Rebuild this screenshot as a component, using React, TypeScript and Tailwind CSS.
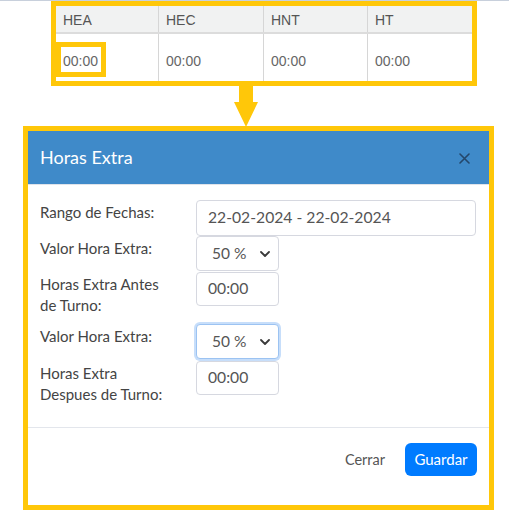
import React from "react";

const columns = ["HEA", "HEC", "HNT", "HT"];
const colWidths = ["w-[102px]", "w-[105px]", "w-[104px]", "w-[104px]"];

function Chevron() {
    return (
        <svg width="10" height="6" viewBox="0 0 10 6" className="ml-auto mr-[8px]">
            <path d="M1 1 L5 5 L9 1" fill="none" stroke="#3a3a3a" strokeWidth="1.8" strokeLinecap="round" strokeLinejoin="round" />
        </svg>
    );
}

function SelectBox({ focused }: { focused?: boolean }) {
    return (
        <div
            className={`flex items-center w-[83px] h-[35px] rounded-[4px] border bg-white pl-[15px] text-[#555] text-[15.5px] ${
                focused ? "border-[#9cc3f2] shadow-[0_0_0_2px_#c7defa]" : "border-[#d6d8e0]"
            }`}
        >
            <span>50 %</span>
            <Chevron />
        </div>
    );
}

function TextBox({ value, wide }: { value: string; wide?: boolean }) {
    return (
        <div
            className={`flex items-center ${wide ? "w-[280px] h-[36px]" : "w-[83px] h-[34px]"} rounded-[4px] border border-[#d6d8e0] bg-white pl-[11px] text-[#555] text-[15.7px]`}
        >
            {value}
        </div>
    );
}

function FormRow({ label, children, height }: { label: React.ReactNode; children: React.ReactNode; height: string }) {
    return (
        <div className={`flex items-start ${height}`}>
            <div className="w-[156px] pt-[2px] leading-[21px] text-[#444]">{label}</div>
            {children}
        </div>
    );
}

export default function App() {
    return (
        <div className="w-[509px] h-[520px] bg-white font-['Lato',sans-serif] text-[15px]">
            <div className="h-[1px] bg-[#c8d0dc]" />

            {/* TABLE */}
            <div className="relative ml-[51px] w-[426px] border-[5px] border-[#ffc709] bg-white font-['Liberation_Sans',Arial,sans-serif] text-[14px]">
                <div className="flex h-[28px] bg-[#f1f2f2] border-b-2 border-[#dcdcdc] text-[#555]">
                    {columns.map((c, i) => (
                        <div key={c} className={`${colWidths[i]} pl-[7px] pt-[4px] ${i > 0 ? "border-l border-[#d6d6d6]" : ""}`}>
                            {c}
                        </div>
                    ))}
                </div>
                <div className="flex h-[47px] text-[#666]">
                    {columns.map((c, i) => (
                        <div key={c} className={`${colWidths[i]} pl-[7px] pt-[17px] ${i > 0 ? "border-l border-[#d6d6d6]" : ""}`}>
                            00:00
                        </div>
                    ))}
                </div>
                <div className="absolute left-0 top-[36px] w-[50px] h-[35px] border-[5px] border-[#ffc709]" />
            </div>

            {/* ARROW */}
            <div className="ml-[234px] h-[40px]">
                <svg width="24" height="41" viewBox="0 0 24 41">
                    <polygon points="5,0 19,0 19,16 24,16 12,41 0,16 5,16" fill="#ffc709" />
                </svg>
            </div>

            {/* MODAL */}
            <div className="ml-[23px] w-[471px] h-[384px] border-[5px] border-[#ffc709] bg-white flex flex-col">
                <div className="flex items-center h-[54px] bg-[#3f8ac9] border-b border-[#dfe3ea] pl-[12px] pr-[13px]">
                    <span className="text-white text-[18px]">Horas Extra</span>
                    <svg width="11" height="11" viewBox="0 0 11 11" className="ml-auto mr-[6px] mt-[2px]">
                        <path d="M1 1 L10 10 M10 1 L1 10" stroke="#24476a" strokeWidth="1.6" strokeLinecap="round" />
                    </svg>
                </div>

                <div className="px-[12px] pt-[15px] h-[243px] border-b border-[#e3e6ec]">
                    <FormRow label="Rango de Fechas:" height="h-[36px]">
                        <TextBox value="22-02-2024 - 22-02-2024" wide />
                    </FormRow>
                    <FormRow label="Valor Hora Extra:" height="h-[36px]">
                        <SelectBox />
                    </FormRow>
                    <FormRow
                        label={
                            <>
                                Horas Extra Antes
                                <br />
                                de Turno:
                            </>
                        }
                        height="h-[52px]"
                    >
                        <TextBox value="00:00" />
                    </FormRow>
                    <FormRow label="Valor Hora Extra:" height="h-[37px]">
                        <SelectBox focused />
                    </FormRow>
                    <FormRow
                        label={
                            <>
                                Horas Extra
                                <br />
                                Despues de Turno:
                            </>
                        }
                        height="h-[44px]"
                    >
                        <TextBox value="00:00" />
                    </FormRow>
                </div>

                <div className="flex items-start justify-end pt-[15px] pr-[12px]">
                    <span className="mt-[6px] mr-[20px] text-[14.5px] text-[#555]">Cerrar</span>
                    <button className="w-[72px] h-[33px] rounded-[6px] bg-[#007bff] text-white text-[15px]">Guardar</button>
                </div>
            </div>
        </div>
    );
}
